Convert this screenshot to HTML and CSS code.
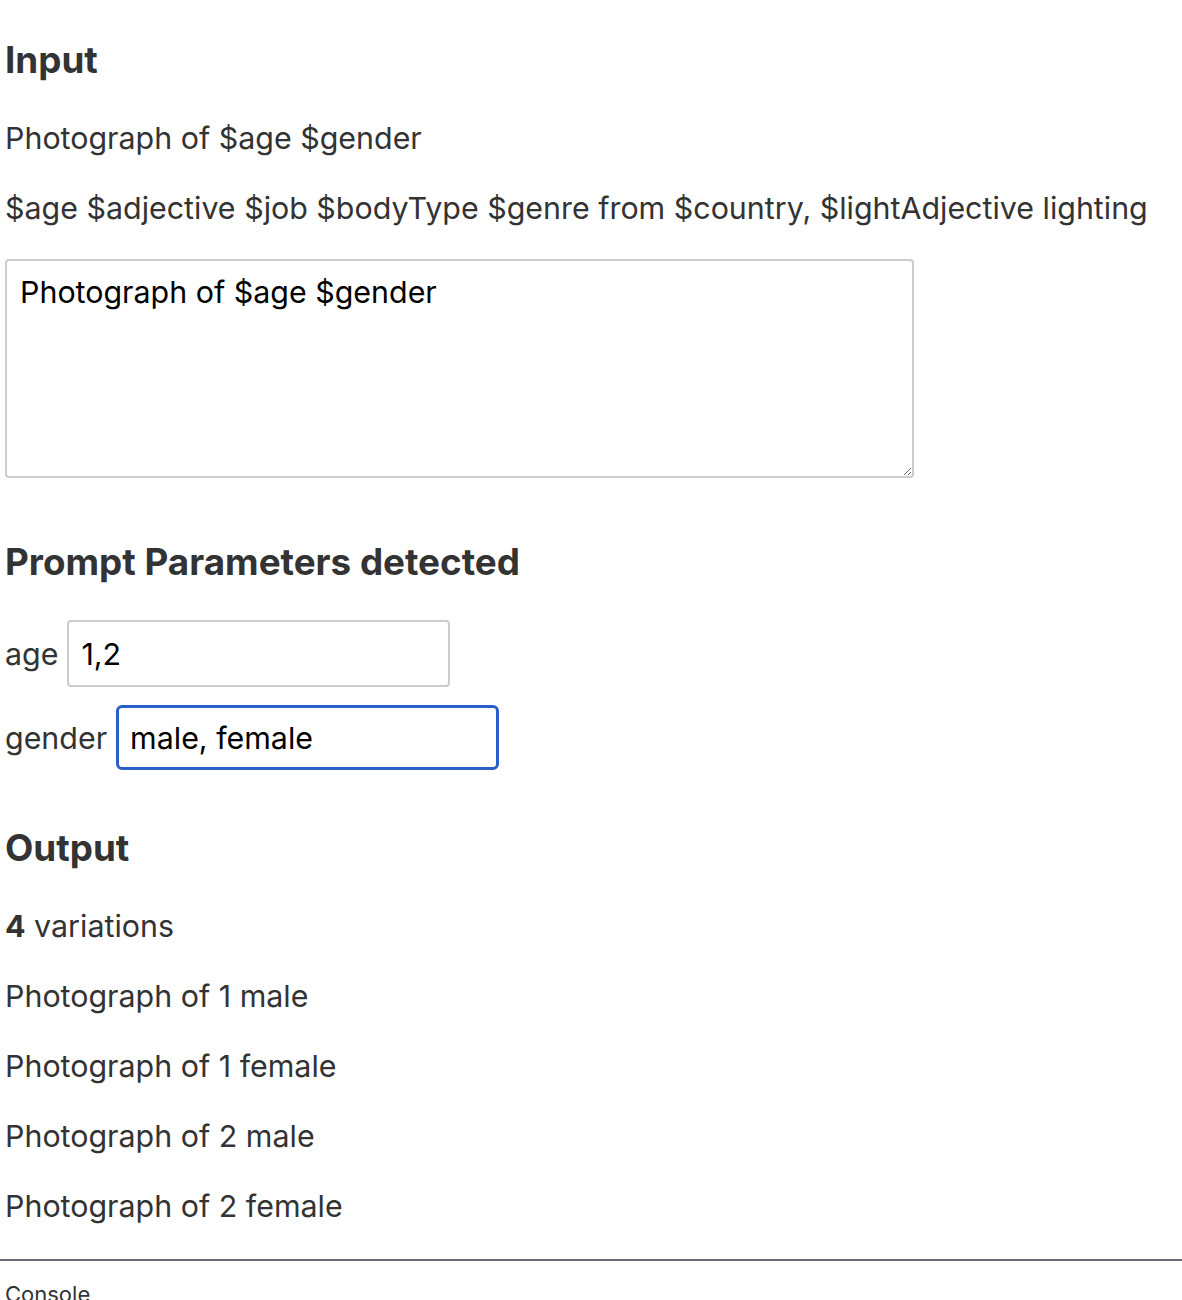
FILE: index.html
```html
<!DOCTYPE html>
<html lang="en">
<head>
    <meta charset="UTF-8">
    <meta name="viewport" content="width=device-width, initial-scale=1.0">
    <title>Prompt Variations</title>
    <link rel="stylesheet" href="styles.css">
</head>
<body>

    <!-- Prompt input -->
    <div class="app">
        <h3>Input</h3>
        <p>Photograph of $age $gender</p>
        <p>$age $adjective $job $bodyType $genre from $country, $lightAdjective lighting</p>

        <div class="prompt-box">
            <textarea class="prompt-input">Photograph of $age $gender</textarea>
        </div>

        <!-- Parameters found in the prompt -->
        <h3 class="params-title">Prompt Parameters detected</h3>
        <div class="param">
            <label for="age">age</label>
            <input type="text" id="age" value="1,2">
        </div>
        <div class="param">
            <label for="gender">gender</label>
            <input type="text" id="gender" class="focused" value="male, female">
        </div>

        <!-- Generated variations -->
        <h3 class="output-title">Output</h3>
        <p><b>4</b> variations</p>
        <p>Photograph of 1 male</p>
        <p>Photograph of 1 female</p>
        <p>Photograph of 2 male</p>
        <p>Photograph of 2 female</p>
    </div>

    <hr class="divider">
    <div class="console">Console</div>

</body>
</html>
```

FILE: styles.css
```css
body {
    font-family: Inter, "Noto Sans", Arial, sans-serif;
    color: #333;
    background-color: #fff;
    margin: 0;
    padding: 0;
}

.app {
    padding: 0 5px;
    overflow: hidden;
}

h3 {
    font-size: 36.8px;
    font-weight: 700;
    line-height: 42px;
    margin: 39px 0 40px;
}

.params-title {
    margin-top: 63px;
    margin-bottom: 37px;
}

.output-title {
    margin-top: 57px;
}

p {
    font-size: 30.4px;
    line-height: 35px;
    margin: 35px 0;
}

.prompt-box {
    margin-top: -2px;
    line-height: 0;
}

.prompt-input {
    width: 909px;
    height: 219px;
    box-sizing: border-box;
    padding: 14px 13px;
    border: 2px solid #ccc;
    border-radius: 4px;
    font-family: Inter, "Noto Sans", Arial, sans-serif;
    font-size: 30.4px;
    line-height: 35px;
    color: #000;
    resize: vertical;
}

.param {
    display: flex;
    align-items: center;
    gap: 9px;
    margin-bottom: 18px;
    font-size: 30.4px;
}

.param input {
    width: 383px;
    height: 67px;
    box-sizing: border-box;
    padding: 0 12px;
    border: 2px solid #ccc;
    border-radius: 4px;
    font-family: Inter, "Noto Sans", Arial, sans-serif;
    font-size: 30.4px;
    color: #000;
}

.param input.focused {
    height: 65px;
    border: 3px solid #2a5fc9;
    border-radius: 6px;
    padding: 0 11px;
    outline: none;
}

.divider {
    border: none;
    border-top: 2px solid #6b6b75;
    margin: 0;
}

.console {
    font-size: 22px;
    padding: 20px 5px 0;
}
```
